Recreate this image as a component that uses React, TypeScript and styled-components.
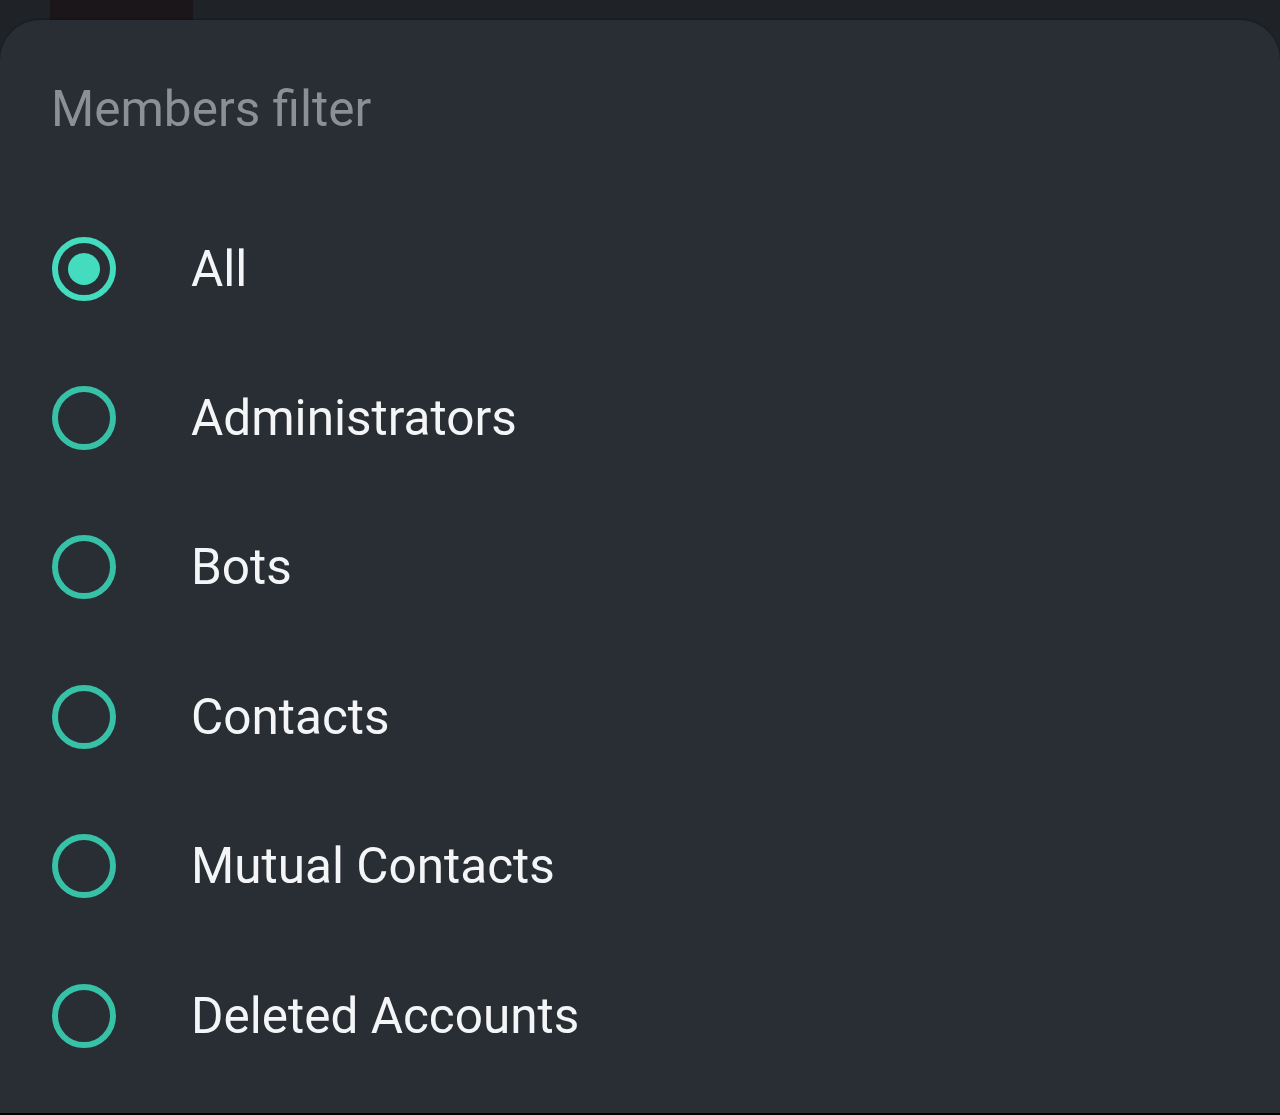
import React, { useState } from "react";
import styled, { createGlobalStyle } from "styled-components";

const GlobalStyle = createGlobalStyle`
  html, body {
    margin: 0;
    padding: 0;
    background: #1f2227;
    font-family: Roboto, "Noto Sans", sans-serif;
  }
`;

const options = [
  "All",
  "Administrators",
  "Bots",
  "Contacts",
  "Mutual Contacts",
  "Deleted Accounts",
];

const App = () => {
  const [selected, setSelected] = useState("All");
  return (
    <Page>
      <GlobalStyle />
      <Backdrop>
        <Thumb />
      </Backdrop>
      <Sheet>
        <Title>Members filter</Title>
        <List>
          {options.map((label) => (
            <Row key={label} onClick={() => setSelected(label)}>
              <Radio checked={selected === label} />
              <Label>{label}</Label>
            </Row>
          ))}
        </List>
      </Sheet>
      <NavEdge />
    </Page>
  );
};

export default App;

const Page = styled.div`
  width: 1280px;
  height: 1115px;
  display: flex;
  flex-direction: column;
  overflow: hidden;
`;

const Backdrop = styled.div`
  height: 20px;
  padding-left: 50px;
  background: #1f2226;
`;

const Thumb = styled.div`
  width: 143px;
  height: 20px;
  background: #1b1619;
`;

const Sheet = styled.div`
  flex: 1;
  background: #292d34;
  border-radius: 40px 40px 0 0;
  padding: 0 0 0 51px;
  box-shadow: 0 -1px 2px rgba(0, 0, 0, 0.25);
`;

const Title = styled.div`
  margin-top: 61px;
  height: 56px;
  line-height: 56px;
  font-size: 49.5px;
  color: #8a9098;
`;

const List = styled.div`
  margin-top: 57px;
  display: flex;
  flex-direction: column;
`;

const Row = styled.div`
  display: flex;
  align-items: center;
  height: 149.4px;
  cursor: pointer;
`;

const Radio = styled.div<{ checked: boolean }>`
  width: 64px;
  height: 64px;
  margin-left: 1px;
  box-sizing: border-box;
  border-radius: 50%;
  border: 6px solid ${(p) => (p.checked ? "#43dcbf" : "#37c2a8")};
  display: flex;
  align-items: center;
  justify-content: center;
  flex-shrink: 0;

  &::after {
    content: "";
    width: 32px;
    height: 32px;
    border-radius: 50%;
    background: #43dcbf;
    display: ${(p) => (p.checked ? "block" : "none")};
  }
`;

const Label = styled.span`
  margin-left: 75px;
  font-size: 49.5px;
  color: #f4f5f6;
`;

const NavEdge = styled.div`
  height: 2px;
  background: #000;
`;
